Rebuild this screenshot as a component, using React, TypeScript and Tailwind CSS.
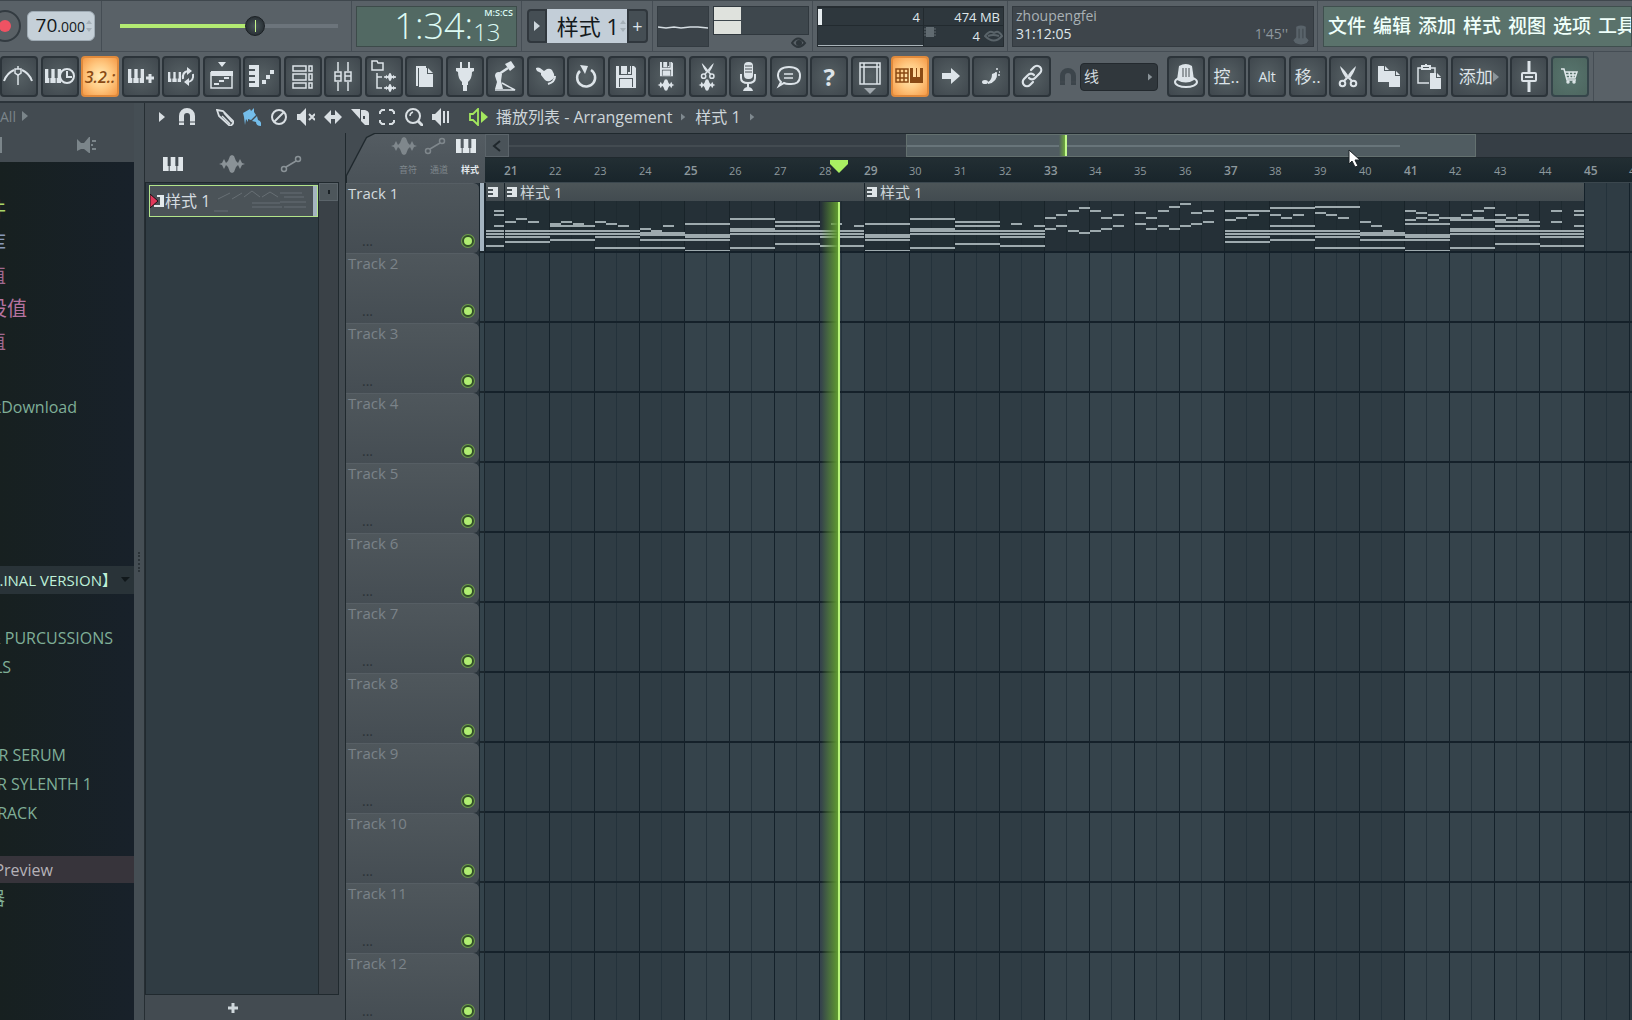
import * as React from 'react';
import { clsx } from 'clsx';

const SANS = "font-['Open_Sans','Noto_Sans_CJK_SC',sans-serif]";

/* ---------- shared glyphs ---------- */

function Glyph({
  w = 38,
  h = 41,
  className,
  children,
}: {
  w?: number;
  h?: number;
  className?: string;
  children: React.ReactNode;
}) {
  return (
    <svg
      width={w}
      height={h}
      viewBox={`0 0 ${w} ${h}`}
      fill="none"
      stroke="currentColor"
      strokeWidth="2"
      className={clsx('shrink-0', className)}
      aria-hidden="true"
    >
      {children}
    </svg>
  );
}

// Three piano keys, drawn in a w x h box at x, y.
function Keys({ x, y, w, h }: { x: number; y: number; w: number; h: number }) {
  const k = w / 3;
  return (
    <path
      stroke="none"
      fill="currentColor"
      fillRule="evenodd"
      d={`M${x} ${y}h${w}v${h}h${-w}z M${x + k - 2} ${y}h3v${h * 0.65}h-3z M${
        x + 2 * k - 1
      } ${y}h3v${h * 0.65}h-3z M${x + k - 1} ${y + h * 0.65}h1v${h * 0.35}h-1z M${
        x + 2 * k
      } ${y + h * 0.65}h1v${h * 0.35}h-1z`}
    />
  );
}

function Wave({ x, y, s = 1 }: { x: number; y: number; s?: number }) {
  return (
    <path
      transform={`translate(${x} ${y}) scale(${s})`}
      stroke="none"
      fill="currentColor"
      d="M-13 0l3-1 2-4 2 4 2-2 2-5 2-1 2 1 2 5 2 2 2-4 2 4 3 1-3 1-2 4-2-4-2 2-2 5-2 1-2-1-2-5-2-2-2 4-2-4z"
    />
  );
}

const FILL = { stroke: 'none', fill: 'currentColor' };

const Play = ({ className }: { className?: string }) => (
  <Glyph w={7} h={12} className={className}>
    <path {...FILL} d="M0 1l6 5-6 5z" />
  </Glyph>
);

const Magnet = ({ className }: { className?: string }) => (
  <Glyph w={18} h={20} className={className}>
    <path {...FILL} d="M1 18V9a8 8 0 0 1 16 0v9h-5V9a3 3 0 0 0-6 0v9z" />
    <path d="M1 15h5M12 15h5" stroke="#434b51" strokeWidth="1" />
  </Glyph>
);

const Automation = ({ className }: { className?: string }) => (
  <Glyph w={22} h={18} className={className}>
    <circle cx="4" cy="14" r="2.5" strokeWidth="1.5" />
    <circle cx="18" cy="4" r="2.5" strokeWidth="1.5" />
    <path d="M6 12l10-6" strokeWidth="1.5" />
  </Glyph>
);

const WaveIcon = ({ className }: { className?: string }) => (
  <Glyph w={26} h={18} className={className}>
    <Wave x={13} y={9} />
  </Glyph>
);

const PianoIcon = ({ className }: { className?: string }) => (
  <Glyph w={20} h={16} className={className}>
    <Keys x={0} y={1} w={20} h={14} />
  </Glyph>
);

const Scissors = ({ s = 1, x = 0, y = 0 }: { s?: number; x?: number; y?: number }) => (
  <g transform={`translate(${x} ${y}) scale(${s})`}>
    <path {...FILL} d="M1 0q4 3 10 12l-2 3Q2 6 1 0zM17 0q-4 3-10 12l2 3Q16 6 17 0z" />
    <circle cx="3.5" cy="17.5" r="2.8" />
    <circle cx="14.5" cy="17.5" r="2.8" />
    <path d="M5 15l5-5M13 15l-5-5" />
  </g>
);

const Floppy = ({ x, y, s }: { x: number; y: number; s: number }) => (
  <g transform={`translate(${x} ${y}) scale(${s})`} stroke="none">
    <path
      fill="currentColor"
      fillRule="evenodd"
      d="M0 0h3v9h13V0h2l2 2v20H0zM3 12h14v9H3z"
    />
    <path fill="currentColor" d="M4 13h12v8H4zM5 0h6v8H5zM14 0h1v8h-3V6h2z" />
  </g>
);

const Page = ({ x, y }: { x: number; y: number }) => (
  <g transform={`translate(${x} ${y})`} stroke="none" fill="currentColor">
    <path d="M0 0h6v5h5v11H0z" />
    <path d="M7 0l4 4H7z" />
  </g>
);

/* ---------- toolbar ---------- */

interface Tool {
  label: string;
  icon?: React.ReactNode;
  text?: string;
  on?: boolean;
}

const TOOLS: Tool[] = [
  {
    label: 'Metronome',
    icon: (
      <>
        <path d="M4 25Q7 17 14 14M22 14q7 3 10 11" />
        <path d="M18 18v11" strokeWidth="1.5" />
        <path d="M15 13h6v4l-3 2-3-2zM18 10v3" strokeWidth="1.5" />
      </>
    ),
  },
  {
    label: 'Wait for input',
    icon: (
      <>
        <Keys x={4} y={13} w={16} h={14} />
        <circle cx="26" cy="20" r="7" fill="#4a5357" />
        <path d="M26 15v6h5" />
      </>
    ),
  },
  { label: 'Countdown', text: '3.2.:', on: true },
  {
    label: 'Overdub',
    icon: (
      <>
        <Keys x={6} y={13} w={16} h={14} />
        <path d="M28 18v9M24 22h8" strokeWidth="3" />
      </>
    ),
  },
  {
    label: 'Loop recording',
    icon: (
      <>
        <Keys x={6} y={16} w={13} h={10} />
        <path d="M21 23q-1-7 5-8M31 18q1 7-5 8" />
        <path {...FILL} d="M25 11l5 4-5 4zM27 22v8l-5-4z" />
      </>
    ),
  },
  {
    label: 'Playlist',
    icon: (
      <>
        <path {...FILL} d="M15 6h8l-4 5zM8 15h22v5H8z" />
        <path d="M8 16v16h21V16" strokeWidth="1.5" />
        <path d="M11 28h5M16 25h5M21 22h5" />
      </>
    ),
  },
  {
    label: 'Piano roll',
    icon: (
      <>
        <path {...FILL} d="M6 9h10v22H6v-4h6v-2H6v-4h6v-2H6v-4h6v-2H6z" />
        <path d="M19 26h4M23 21h4M27 16h4" strokeWidth="4" />
      </>
    ),
  },
  {
    label: 'Channel rack',
    icon: (
      <g strokeWidth="1.5">
        <path d="M9 10h13v5H9zM9 18h13v6H9zM9 27h13v5H9z" />
        <path d="M25 10h3v5h-3zM25 18h3v6h-3zM25 27h3v5h-3z" />
      </g>
    ),
  },
  {
    label: 'Mixer',
    icon: (
      <g strokeWidth="1.5">
        <path d="M14 6v9M14 26v9M24 6v9M24 26v9" />
        <path d="M11 16h6v9h-6zM21 16h6v9h-6zM11 20h6M21 20h6" />
      </g>
    ),
  },
  {
    label: 'Browser',
    icon: (
      <g strokeWidth="1.5">
        <path d="M7 5h5l1 2h5v7H7zM12 17v15h5M12 21h5" />
        <Wave x={25} y={21} s={0.45} />
        <Wave x={25} y={32} s={0.45} />
        <path d="M19 21h12M19 32h12" />
      </g>
    ),
  },
  {
    label: 'Templates',
    icon: (
      <>
        <path {...FILL} d="M14 12h8v6h6v13H14zM23 12l5 5h-5z" />
        <path d="M12 30V11h9" />
      </>
    ),
  },
  {
    label: 'Plugins',
    icon: (
      <path
        {...FILL}
        d="M14 6h2v6h6V6h2v6h4v3l-2 1q0 7-4 10v3h-1v6h-4v-6h-1v-3q-4-3-4-10l-2-1v-3h4z"
      />
    ),
  },
  {
    label: 'Tempo tapper',
    icon: (
      <>
        <path {...FILL} d="M19 8l6-3 4 6-5 4z" />
        <path {...FILL} d="M9 20q0-4 4-4l3 2-1 7 2 8H9l2-7z" />
        <path d="M13 18l9-6" strokeWidth="2.5" />
        <path d="M9 34h20L16 27" strokeWidth="1.5" />
      </>
    ),
  },
  {
    label: 'Touch',
    icon: (
      <>
        <path
          {...FILL}
          d="M9 12q2-1 4 0l4 3 3-2q3-1 5 1l2 4q1 3-1 5l-3 2q-3 1-5-1l-4-5v-2l-4-2-1-2z"
        />
        <path d="M28 20q0 6-7 8" />
      </>
    ),
  },
  {
    label: 'Undo',
    icon: (
      <>
        <path d="M13 15a9 9 0 1 0 11-1" strokeWidth="2.5" />
        <path {...FILL} d="M13 9l8 1-3 8z" />
      </>
    ),
  },
  { label: 'Save', icon: <Floppy x={8} y={10} s={1} /> },
  {
    label: 'Render',
    icon: (
      <>
        <Floppy x={12} y={6} s={0.65} />
        <Wave x={18} y={29} s={0.65} />
      </>
    ),
  },
  {
    label: 'Edison',
    icon: (
      <>
        <Scissors x={12} y={7} s={0.75} />
        <Wave x={18} y={29} s={0.65} />
      </>
    ),
  },
  {
    label: 'Record audio',
    icon: (
      <>
        <rect {...FILL} x="15" y="6" width="9" height="17" rx="4" />
        <path d="M16 10h7M16 13h7M16 16h7" stroke="#4a5357" strokeWidth="1" />
        <path d="M12 18v4q0 5 7 5t7-5v-4M19 27v6" />
        <path {...FILL} d="M14 35q1-4 5-4t5 4z" />
      </>
    ),
  },
  {
    label: 'Comments',
    icon: (
      <>
        <path d="M11 26q-3-3-3-6 0-9 11-9t11 9-11 8q-3 0-5-1l-5 3z" />
        <path d="M14 18h9M14 22h9" strokeWidth="1.5" />
      </>
    ),
  },
  { label: 'Help', text: '?' },
  {
    label: 'View',
    icon: (
      <>
        <path d="M9 7h20v21H9zM9 11h20M13 7v21M26 7v21" strokeWidth="1.5" />
        <path {...FILL} d="M13 32h12l-6 6z" opacity=".6" />
      </>
    ),
  },
  {
    label: 'Typing keyboard',
    on: true,
    icon: (
      <>
        <path
          d="M5 13h12v13H5zM5 17h12M5 22h12M9 13v13M13 13v13"
          strokeWidth="1.5"
        />
        <path {...FILL} d="M19 12h3v9h3v-9h1v9h3v-9h3v15H19z" />
      </>
    ),
  },
  {
    label: 'Step edit',
    icon: <path {...FILL} d="M10 17h9v-5l9 8-9 8v-5h-9z" />,
  },
  {
    label: 'Glue',
    icon: (
      <>
        <ellipse {...FILL} cx="13" cy="26" rx="3" ry="2" />
        <path {...FILL} d="M16 26q4-2 4-8l5-2q1 10-9 12z" />
        <path d="M24 13h2M27 16h1M26 19h2M23 17h1" strokeWidth="1.5" />
      </>
    ),
  },
  {
    label: 'Link',
    icon: (
      <g strokeWidth="2.2" strokeLinecap="round">
        <path d="M16 22a4 4 0 0 0 6 0l5-5a4 4 0 0 0-6-6l-3 3" />
        <path d="M21 19a4 4 0 0 0-6 0l-4 4a4 4 0 0 0 6 6l3-3" />
      </g>
    ),
  },
];

const TOOLS_RIGHT: Tool[] = [
  {
    label: 'Hat',
    icon: (
      <>
        <ellipse cx="19" cy="26" rx="11" ry="5" />
        <path {...FILL} d="M12 10q7-4 13 0l2 14q-8 5-17 0z" />
        <path d="M16 12v9M19 12v9M22 12v9" stroke="#4a5357" strokeWidth="1" />
      </>
    ),
  },
  { label: 'Control', text: '控..' },
  { label: 'Alt', text: 'Alt' },
  { label: 'Shift', text: '移..' },
  { label: 'Cut', icon: <Scissors x={10} y={10} /> },
  {
    label: 'Copy',
    icon: (
      <>
        <Page x={8} y={10} />
        <Page x={19} y={15} />
      </>
    ),
  },
  {
    label: 'Paste',
    icon: (
      <>
        <path d="M19 27H8V12h4M20 12h5v5" strokeWidth="1.5" />
        <path d="M12 10h8v3h-8zM15 9h2" />
        <Page x={20} y={17} />
      </>
    ),
  },
  { label: 'Add', text: '添加' },
  {
    label: 'Fader',
    icon: (
      <>
        <path d="M19 5v11M19 26v10" strokeWidth="3" />
        <rect x="12" y="17" width="14" height="8" rx="1" />
        <path d="M15 21h8" />
      </>
    ),
  },
  {
    label: 'Shop',
    icon: (
      <g strokeWidth="1.5">
        <path d="M10 13h3l3 11h9M14 16h12l-2 6H15M18 16l1 6M22 16v6M14 19h11" />
        <circle cx="17" cy="26" r="1" />
        <circle cx="23" cy="26" r="1" />
      </g>
    ),
  },
];

function ToolButton({ tool }: { tool: Tool }) {
  const wide = tool.label === 'Add';
  return (
    <button
      type="button"
      aria-label={tool.label}
      aria-pressed={tool.on}
      className={clsx(
        'flex h-[41px] shrink-0 items-center justify-center overflow-hidden rounded-sm border-2',
        wide ? 'w-[57px]' : 'w-[38px]',
        tool.on
          ? 'border-[#e08a3c] bg-radial from-[#ffedb8] via-[#ffc880] to-[#f59a45] text-[#8a4a14]'
          : tool.label === 'Shop'
            ? 'border-[#35454a] bg-radial from-[#58756e] to-[#4d665f] text-[#dfe8ea]'
            : 'border-[#2c343a] bg-radial from-[#566064] to-[#3f474d] text-[#dde4e9]'
      )}
    >
      {tool.icon && <Glyph>{tool.icon}</Glyph>}
      {tool.text && (
        <span
          className={clsx(
            'whitespace-nowrap',
            SANS,
            tool.text === '?'
              ? 'text-2xl font-bold'
              : tool.text === 'Alt'
                ? 'text-[14px]'
                : tool.on
                  ? 'text-[16px] font-semibold italic'
                  : 'text-[17px]'
          )}
        >
          {tool.text}
        </span>
      )}
      {wide && <Play className="text-[#8b9499]" />}
    </button>
  );
}

/* ---------- transport bar ---------- */

const MENU = ['文件', '编辑', '添加', '样式', '视图', '选项', '工具'];

const Updown = () => (
  <Glyph w={8} h={16} className="text-[#a5b0b8]">
    <path {...FILL} d="M1 6l3-4 3 4zM1 10l3 4 3-4z" />
  </Glyph>
);

const sep = 'border-r border-[#454d54]';

function Transport() {
  return (
    <div
      className={clsx(
        'flex h-[51px] items-stretch border-b border-[#454d54]',
        SANS
      )}
    >
      <div className={clsx('flex w-[102px] shrink-0 items-center', sep)}>
        <button
          type="button"
          aria-label="Record"
          className="-ml-[11px] flex size-8 shrink-0 items-center justify-center rounded-full border-2 border-[#333b41] bg-[#596065]"
        >
          <span className="size-3 rounded-full bg-[#ef5263]" />
        </button>
        <div className="ml-[6px] flex h-[30px] w-[68px] items-center justify-end rounded-md border border-[#9fabb4] bg-[#c5d0d8] pr-px text-[#14191c]">
          <span className="flex items-baseline text-[19px] leading-7">
            70<span className="text-[14px]">.000</span>
          </span>
          <Updown />
        </div>
      </div>
      <div className={clsx('flex w-[250px] shrink-0 items-center pl-[18px]', sep)}>
        <div className="relative flex h-6 w-[218px] items-center">
          <div className="h-1 w-[130px] bg-[#b3ea72]" />
          <div className="h-1 flex-1 bg-[#6c747b]" />
          <input
            type="range"
            aria-label="Main pitch"
            defaultValue={62}
            className="absolute inset-0 opacity-0"
          />
          <div className="pointer-events-none absolute left-[125px] flex size-5 items-center justify-center rounded-full border border-[#1b2024] bg-radial from-[#4b565c] to-[#1e2428]">
            <div className="h-3 w-px bg-[#c5f58b]" />
          </div>
        </div>
      </div>
      <div className={clsx('flex w-[170px] shrink-0 items-center pl-1', sep)}>
        <div className="flex h-[41px] w-[161px] items-stretch justify-end border border-[#3d4b4a] bg-[#526963] pr-[3px] text-[#ddfaf4]">
          <span className="text-[36px] leading-[38px] font-light">1:34:</span>
          <div className="flex flex-col">
            <span className="pl-[11px] text-[9px] leading-[11px] font-semibold">
              M:S:CS
            </span>
            <span className="text-[24px] leading-[28px] font-light">13</span>
          </div>
        </div>
      </div>
      <div className={clsx('flex w-[131px] shrink-0 items-center pl-[5px]', sep)}>
        <button
          type="button"
          aria-label="Pattern menu"
          className="flex h-[34px] w-5 items-center justify-center rounded-l border-2 border-[#30373d] bg-[#454e54] text-[#cdd6dc]"
        >
          <Play />
        </button>
        <div className="flex h-[34px] w-[80px] items-center justify-end bg-[#c3ced8] text-[22px] leading-[34px] whitespace-nowrap text-[#14191c]">
          样式 1
          <Updown />
        </div>
        <button
          type="button"
          aria-label="Add pattern"
          className="h-[34px] w-[21px] rounded-r border-2 border-[#30373d] bg-[#454e54] text-[18px] leading-none text-[#dde4e9]"
        >
          +
        </button>
      </div>
      <div className={clsx('flex w-[160px] shrink-0 gap-1 pt-[5px] pl-1', sep)}>
        <div className="flex h-[41px] w-[52px] items-center border border-[#333b41] bg-[#3b4349]">
          <Glyph w={50} h={8} className="text-[#d5dde2]">
            <path d="M0 4l8 1 8-1 7 1 9-1h8l10 1" strokeWidth="1.5" />
          </Glyph>
        </div>
        <div className="flex flex-col items-end">
          <div className="flex h-[29px] w-[96px] border border-[#30383e] bg-[#3e474d]">
            <div className="flex w-[27px] flex-col gap-px">
              <div className="flex-1 bg-[#dfe2dd]" />
              <div className="flex-1 bg-[#dfe2dd]" />
            </div>
          </div>
          <Glyph w={16} h={12} className="mt-[2px] mr-[2px] text-[#2e363b]">
            <path d="M1 6q6-9 13 0-7 8-13 0z" />
            <circle {...FILL} cx="8" cy="6" r="3" />
          </Glyph>
        </div>
      </div>
      <div className={clsx('flex w-[195px] shrink-0 pt-[5px] pl-1', sep)}>
        <div className="flex h-[41px] w-[187px] border border-t-2 border-[#252c31] bg-[#2e373d] text-[13px] text-[#dfe6ea]">
          <div className="flex w-[106px] flex-col border-r border-[#222a2f]">
            <div className="flex h-[18px] items-center justify-between border-b border-[#222a2f] pr-[3px]">
              <span className="h-4 w-1 bg-[#e6ecef]" />
              <span className="leading-[18px]">4</span>
            </div>
            <div className="mt-auto h-px bg-[#aab4ba]" />
          </div>
          <div className="flex flex-1 flex-col">
            <div className="h-[18px] border-b border-[#222a2f] pr-[3px] text-right leading-[18px]">
              474 MB
            </div>
            <div className="flex items-center justify-end gap-1">
              <Glyph w={12} h={10} className="mr-auto mb-2 text-[#616b71]">
                <path {...FILL} d="M2 0h8v10H2z" />
                <path d="M0 2h12M0 5h12M0 8h12" strokeWidth="1" />
              </Glyph>
              <span className="leading-5">4</span>
              <Glyph w={19} h={12} className="text-[#5a646a]">
                <path d="M1 6q4-5 7-4l2 1 2-1q3-1 6 4-8 9-17 0zM4 6q5-2 11 0" />
              </Glyph>
            </div>
          </div>
        </div>
      </div>
      <div className={clsx('flex w-[310px] shrink-0 pt-[5px] pl-1', sep)}>
        <div className="flex h-[41px] w-[302px] items-end justify-between border border-[#333a40] bg-[#3e454b] px-[3px] text-[14px]">
          <div className="self-start leading-[18px]">
            <div className="text-[#a9b1b5]">zhoupengfei</div>
            <div className="text-[#dfe6ea]">31:12:05</div>
          </div>
          <div className="flex items-end gap-1 text-[#8f989e]">
            <span className="pb-1 leading-4">1'45''</span>
            <Glyph w={18} h={22} className="pb-px text-[#59636a]">
              <path {...FILL} d="M4 3q5-3 10 0v11l3 3-2 3q-6 3-12 0l-2-3 3-3z" />
              <path d="M7 5v10M11 5v10" stroke="#3e454b" strokeWidth="1" />
            </Glyph>
          </div>
        </div>
      </div>
      <nav className="mt-[5px] ml-[5px] flex h-[41px] min-w-0 flex-1 items-center gap-[7px] overflow-hidden border border-[#3f4f4e] bg-[#5a726b] pl-1 text-[19px] font-medium whitespace-nowrap text-[#effffa]">
        {MENU.map((m) => (
          <a key={m} href="#" className="shrink-0">
            {m}
          </a>
        ))}
      </nav>
    </div>
  );
}

function Toolbar() {
  return (
    <div className="flex h-[51px] items-center border-b-2 border-[#2c343a]">
      <div className="flex w-[1051px] shrink-0 justify-between">
        {TOOLS.map((t) => (
          <ToolButton key={t.label} tool={t} />
        ))}
      </div>
      <Magnet className="ml-2 text-[#3c454b]" />
      <select
        aria-label="Snap"
        className={clsx(
          'ml-[3px] h-7 w-[78px] shrink-0 appearance-none rounded-sm border border-[#23292e] bg-[#30373c] px-[3px] text-[15px] leading-none text-[#d2dade]',
          SANS
        )}
      >
        <option>线</option>
      </select>
      <Play className="-ml-[10px] w-[5px] text-[#8b9499]" />
      <div className="ml-[14px] flex h-full w-[427px] shrink-0 items-center justify-between border-r border-[#454d54] pr-1">
        {TOOLS_RIGHT.map((t) => (
          <ToolButton key={t.label} tool={t} />
        ))}
      </div>
    </div>
  );
}

/* ---------- browser ---------- */

// Labels are scrolled partly out of the panel, so each one is anchored by its right edge.
function BrowserRow({
  text,
  end,
  className,
}: {
  text: string;
  end: string;
  className?: string;
}) {
  return (
    <li className={clsx('flex items-center', className)}>
      <span className={clsx('flex justify-end whitespace-nowrap', end)}>{text}</span>
    </li>
  );
}

function Browser() {
  const folder = 'h-[29px] text-[#7fae97]';
  return (
    <aside
      className={clsx(
        'flex w-[134px] shrink-0 flex-col overflow-hidden bg-linear-to-r from-[#172020] to-[#18212a]',
        SANS
      )}
    >
      <div className="h-[59px] bg-[#434b51] text-[#7b858a]">
        <div className="flex h-[26px] items-center gap-[6px] text-[14px]">
          All
          <Play />
        </div>
        <div className="flex h-[32px] items-center">
          <div className="h-4 w-[2px] bg-[#7b858a]" />
          <Glyph w={20} h={18} className="ml-[75px]">
            <path {...FILL} d="M0 3l4 4h3l5-6h1v16h-1l-5-4H4l-4 2z" />
            <path d="M15 5h4M14 9h2M15 13h4" />
          </Glyph>
        </div>
      </div>
      <ul className="pt-[31px] text-[20px] leading-7">
        <BrowserRow text="件" end="w-[6px]" className="h-[33px] text-[#a8d568]" />
        <BrowserRow text="库" end="w-[6px]" className="h-[33px] text-[#8799b8]" />
        <BrowserRow text="值" end="w-[6px]" className="h-[33px] text-[#a0688f]" />
        <BrowserRow text="设值" end="w-[27px]" className="h-[33px] text-[#b573a0]" />
        <BrowserRow text="值" end="w-[6px]" className="h-[33px] text-[#a0688f]" />
      </ul>
      <ul className="mt-[32px] text-[16px] leading-6">
        <BrowserRow text="kDownload" end="w-[77px]" className="h-[33px] text-[#7fae97]" />
        <li className="mt-[143px] flex h-7 items-center justify-between bg-[#293338] pr-1 text-[#bff0d8]">
          <span className="flex w-[117px] justify-end text-[15px] whitespace-nowrap">
            ..INAL VERSION】
          </span>
          <Glyph w={9} h={6} className="text-[#11181b]">
            <path {...FILL} d="M0 0h9L4 5z" />
          </Glyph>
        </li>
        <BrowserRow text="& PURCUSSIONS" end="w-[113px]" className={`mt-[29px] ${folder}`} />
        <BrowserRow text="LS" end="w-[11px]" className={folder} />
        <BrowserRow text="R SERUM" end="w-[66px]" className={`mt-[59px] ${folder}`} />
        <BrowserRow text="R SYLENTH 1" end="w-[92px]" className={folder} />
        <BrowserRow text="RACK" end="w-[37px]" className={folder} />
        <BrowserRow
          text="Preview"
          end="w-[53px]"
          className="mt-[29px] h-[27px] bg-[#37343b] text-[#b5b2b8]"
        />
        <BrowserRow text="器" end="w-[5px]" className={`text-[18px] ${folder}`} />
      </ul>
    </aside>
  );
}

/* ---------- playlist ---------- */

const BAR = 45;

// Notes per bar: [first quarter, length in quarters, y].
type Note = [number, number, number];
const full = (...ys: number[]): Note[] => ys.map((y) => [0, 4, y]);
// One note per quarter, null leaves a rest.
const run = (...ys: (number | null)[]): Note[] =>
  ys.flatMap((y, i) => (y === null ? [] : [[i, 1, y] as Note]));

const A = full(36, 46, 48, 51, 65);
const B = full(39, 43, 48, 51, 61);
const C = [...full(48, 51, 54, 63), ...run(null, 41, null, 43)];
const D = full(41, 52, 54, 57, 68);

// Only the last beats of this clip are in view.
const INTRO: Note[][] = [
  [
    [0, 2, 48],
    [0, 2, 51],
    [0, 2, 54],
    [0, 2, 63],
    [0.7, 1, 28],
    [0.7, 1, 32],
    [0.7, 1, 43],
  ],
];

const FIRST: Note[][] = [
  [...run(39, 36, 39), ...full(48, 51, 54, 59)],
  [...run(41, 39, 41), ...full(43, 48, 51, 57)],
  [...run(39, 41, 43), ...full(48, 51, 54, 65)],
  [...run(46, 48, 43), ...full(50, 52, 57, 65)],
  D,
  A,
  B,
  C,
];

const SECOND: Note[][] = [
  D,
  A,
  B,
  C,
  [...run(35, 32, 28, 25), ...run(46, 43, 48, 50)],
  [...run(28, 35, 32), ...run(48, 46, 43)],
  [...run(30, 35, 28, 24), ...run(41, 46, 43, 46)],
  [...run(21, 30, 28), ...run(43, 41, 39)],
  [...run(37, 35, 32), ...full(28, 48, 51, 54, 59)],
  [...run(32, 35, 32), ...full(25, 43, 48, 51, 57)],
  [...run(30, 32, 35), ...full(24, 48, 51, 54, 65)],
  [...run(39, 43, 48), ...full(50, 52, 57, 65)],
  [...run(28, 30, 32, 35), ...run(37, 35, 37), ...full(41, 52, 54, 57, 68)],
  [...run(35, 32, 28, 25), ...run(null, null, 35), ...full(37, 46, 48, 51, 65)],
  [...run(32, 35, 32), ...run(37, null, 37), ...full(39, 43, 48, 51, 61)],
  [
    ...run(null, 28, null, 28),
    ...run(null, 39, null, 32),
    ...run(null, null, null, 43),
    ...full(48, 51, 54, 63),
  ],
];

function Notes({ bars, top }: { bars: Note[][]; top: number }) {
  return (
    <svg
      width={bars.length * BAR}
      height={70 - top}
      className="block text-[#9eaaae]"
      fill="currentColor"
      aria-hidden="true"
    >
      {bars.flatMap((notes, b) =>
        notes.map(([q, len, y], i) => (
          <rect
            key={`${b}-${i}`}
            x={Math.round(b * BAR + (q * BAR) / 4)}
            y={y - top - 1}
            width={Math.round((len * BAR) / 4)}
            height={2}
          />
        ))
      )}
    </svg>
  );
}

const ClipMark = () => (
  <Glyph w={12} h={12} className="text-[#dfe5e8]">
    <path {...FILL} d="M1 1h10v10H1V9h5V7H1V5h5V3H1z" />
  </Glyph>
);

function Clip({
  label,
  bars,
  className,
}: {
  label?: string;
  bars: Note[][];
  className: string;
}) {
  return (
    <div
      className={clsx(
        'h-[69px] shrink-0 overflow-hidden border-l border-[#18232a] bg-[#1b252a]/60',
        className
      )}
    >
      <div
        className={clsx(
          'flex h-[18px] items-center gap-[2px] bg-linear-to-b from-[#4c5558] to-[#424b50] pl-px text-[15px] leading-[18px] whitespace-nowrap text-[#ccd4d8]',
          SANS
        )}
      >
        <ClipMark />
        {label}
      </div>
      <Notes bars={bars} top={18} />
    </div>
  );
}

const TRACKS = Array.from({ length: 12 }, (_, i) => `Track ${i + 1}`);
const RULER = Array.from({ length: 26 }, (_, i) => 21 + i);

function TrackHeader({ name, active }: { name: string; active: boolean }) {
  return (
    <div
      className={clsx(
        'flex h-[70px] w-[133px] shrink-0 flex-col justify-between rounded-r-md border-t border-[#565e64] bg-linear-to-b from-[#4f575c] to-[#454d53] pl-[2px]',
        SANS
      )}
    >
      <span
        className={clsx(
          'text-[15px] leading-[18px]',
          active ? 'text-[#d3dade]' : 'text-[#7b8389]'
        )}
      >
        {name}
      </span>
      <div className="flex items-center justify-between pr-[5px] pb-[6px] pl-[14px]">
        <span className="text-[14px] leading-3 text-[#2b3237]">...</span>
        <button
          type="button"
          aria-label={`Mute ${name}`}
          className="size-3 rounded-full border-2 border-[#33502a] bg-[#b0ee72] ring-1 ring-[#6d9c4a]"
        />
      </div>
    </div>
  );
}

function Tracks() {
  return (
    <div className="relative min-h-0 flex-1 overflow-hidden">
      {TRACKS.map((name, i) => (
        <div key={name} className="flex h-[70px] bg-[#2a343b]">
          <TrackHeader name={name} active={i === 0} />
          <div
            className={clsx(
              'w-[6px] shrink-0 border-x border-b-2 border-[#1b262d]',
              i === 0 ? 'bg-[#a4b4c0]' : 'bg-[#34434b]'
            )}
          />
          <div className="flex min-w-0 flex-1 overflow-hidden border-b-2 border-[#15212a] bg-[repeating-linear-gradient(90deg,#14212a_0_1px,transparent_1px_22px,#24323b_22px_23px,transparent_23px_45px),repeating-linear-gradient(90deg,#2f3c44_0_180px,#35434b_180px_360px)] bg-[position:19px_0]">
            {i === 0 && (
              <>
                <Clip bars={INTRO} className="w-[19px]" />
                <Clip label="样式 1" bars={FIRST} className="w-[360px]" />
                <Clip label="样式 1" bars={SECOND} className="w-[720px]" />
              </>
            )}
          </div>
        </div>
      ))}
      {/* Playhead */}
      <div className="absolute top-[19px] bottom-0 left-[475px] w-[19px] border-r-2 border-[#b9f57c] bg-linear-to-r from-[#5f9a30]/0 via-[#5f9a30]/50 to-[#5f9a30]" />
    </div>
  );
}

function Overview() {
  return (
    <div className="flex h-[25px] border-y border-[#20292e] bg-[#363e45]">
      <button
        type="button"
        aria-label="Scroll left"
        className="flex w-6 shrink-0 items-center justify-center border border-[#5b646a] bg-[#4a5359] text-[#1f272c]"
      >
        <Glyph w={10} h={14}>
          <path d="M8 2L2 7l6 5" />
        </Glyph>
      </button>
      <div className="flex min-w-0 flex-1 items-center">
        <div className="h-[2px] w-[397px] bg-[#434b51]" />
        <div className="flex h-full w-[570px] items-center border border-[#63706f] bg-[#505c61]">
          <div className="h-[2px] w-[152px] bg-[#68757a]" />
          <div className="h-full w-2 border-r-2 border-[#c2f98c] bg-linear-to-r from-[#6da83c]/0 to-[#6da83c]" />
          <div className="h-[2px] w-[333px] bg-[#68757a]" />
        </div>
      </div>
    </div>
  );
}

function Ruler() {
  return (
    <div
      className={clsx(
        'relative flex h-[25px] items-center overflow-hidden border-b border-[#3b474e] bg-linear-to-b from-[#222e33] to-[#19252b] pl-[19px] text-[#8d989d]',
        SANS
      )}
    >
      {RULER.map((n) => (
        <span
          key={n}
          className={clsx(
            'w-[45px] shrink-0 pt-[2px] leading-4',
            n % 4 === 1 ? 'text-[12px] font-semibold' : 'text-[11px]'
          )}
        >
          {n}
        </span>
      ))}
      <Glyph w={19} h={14} className="absolute top-[2px] left-[345px] text-[#a9ef62]">
        <path {...FILL} d="M0 0h18v4L9 13 0 4z" />
      </Glyph>
    </div>
  );
}

function FilterTabs() {
  const tabs = [
    { label: '音符', icon: <WaveIcon />, on: false },
    { label: '通道', icon: <Automation />, on: false },
    { label: '样式', icon: <PianoIcon />, on: true },
  ];
  return (
    <div className="h-[50px] w-[139px] shrink-0 bg-[#1f282d] pt-px pl-px [clip-path:polygon(0_100%,0_42px,20px_4px,28px_0,100%_0,100%_100%)]">
      <div className="flex h-full items-stretch justify-end gap-[3px] bg-linear-to-b from-[#545c62] to-[#4a5258] pr-[5px] [clip-path:polygon(0_100%,0_42px,20px_4px,28px_0,100%_0,100%_100%)]">
        {tabs.map((t) => (
          <button
            key={t.label}
            type="button"
            className={clsx(
              'flex w-[28px] flex-col items-center text-[9px] leading-3',
              SANS,
              t.on ? 'font-bold text-[#e2e8ec]' : 'text-[#7f878c]'
            )}
          >
            <span className="flex h-6 items-center">{t.icon}</span>
            <span className="mt-[6px] ml-2 whitespace-nowrap">{t.label}</span>
          </button>
        ))}
      </div>
    </div>
  );
}

function Picker() {
  return (
    <section className="flex w-[194px] shrink-0 flex-col">
      <div className="flex h-[49px] items-center pt-3 pl-[18px] text-[#8a9297]">
        <button type="button" aria-label="Patterns" className="text-[#dfe5e9]">
          <PianoIcon />
        </button>
        <button type="button" aria-label="Audio clips" className="ml-[36px]">
          <WaveIcon />
        </button>
        <button type="button" aria-label="Automation clips" className="ml-[35px]">
          <Automation />
        </button>
      </div>
      <div className="flex min-h-0 flex-1 border border-[#20292e]">
        <div className="min-w-0 flex-1 bg-[#303c43] pt-[2px] pl-[3px]">
          <div
            className={clsx(
              'flex h-[32px] w-[169px] items-center border border-[#b3e58a] bg-[#4b5358] text-[16px] text-[#d5dce0]',
              SANS
            )}
          >
            <Glyph w={14} h={18}>
              <path {...FILL} d="M7 3h7v12H4v-2h6V5H7z" fill="#e3e9ec" />
              <path d="M0 2l8 7-8 7z" fill="#e0395b" stroke="#1c1216" strokeWidth="1" />
            </Glyph>
            <span className="ml-px whitespace-nowrap">样式 1</span>
            <Glyph w={94} h={28} className="ml-1 text-[#676f74]">
              <path
                d="M4 12l12-6M18 12l10-6M30 10l8-6 8 6M48 10l8-5 8 5M38 16h28M38 20h30M66 6h22M70 10h20M66 15h26M70 20h22M0 24h14"
                strokeWidth="1"
              />
            </Glyph>
            <div className="ml-auto h-full w-1 shrink-0 bg-[#a4b4c0]" />
          </div>
        </div>
        <div className="w-5 border-l border-[#20292e] bg-[#3a4147]">
          <div className="flex h-[18px] items-center justify-center border border-[#5b646a] bg-[#4d565b]">
            <span className="h-1 w-[2px] bg-[#1a2125]" />
          </div>
        </div>
      </div>
      <button
        type="button"
        aria-label="Add"
        className="flex h-[25px] items-center pl-[82px] text-[#cfd7db]"
      >
        <Glyph w={12} h={12}>
          <path d="M6 1v10M1 6h10" strokeWidth="3" />
        </Glyph>
      </button>
    </section>
  );
}

const EDIT_TOOLS: Tool[] = [
  {
    label: 'Draw',
    icon: (
      <g strokeWidth="1.8">
        <path d="M1 2l6 1 10 10q1 3-3 5L3 8z" />
        <path d="M6 8l8 8M8 5l8 9" strokeWidth="1.5" />
      </g>
    ),
  },
  {
    label: 'Paint',
    on: true,
    icon: (
      <>
        <path {...FILL} d="M0 5l7-4 1 2 3-3v4l2 3-5 5-3-1v3l-2-3-1 6-1-8z" />
        <path {...FILL} d="M9 13l5-5 1 4q4 1 3 6-5 0-5-4z" />
      </>
    ),
  },
  {
    label: 'Delete',
    icon: (
      <>
        <circle cx="9" cy="9" r="7" />
        <path d="M4 14L14 4" />
      </>
    ),
  },
  {
    label: 'Mute',
    icon: (
      <>
        <path {...FILL} d="M0 6h3l6-6v18l-6-6H0z" />
        <path d="M12 6l6 6M18 6l-6 6" />
      </>
    ),
  },
  {
    label: 'Slip',
    icon: <path {...FILL} d="M0 9l7-7v5h4V2l7 7-7 7v-5H7v5z" />,
  },
  {
    label: 'Slice',
    icon: (
      <path
        {...FILL}
        fillRule="evenodd"
        d="M0 1h9v10zM10 2h4q4 1 4 4v11h-4l-4-4zM12 8v3h2V8z"
      />
    ),
  },
  {
    label: 'Select',
    icon: (
      <path d="M2 6V4l2-2h3M11 2h3l2 2v2M16 12v2l-2 2h-3M7 16H4l-2-2v-2" />
    ),
  },
  {
    label: 'Zoom',
    icon: (
      <>
        <circle cx="8" cy="8" r="7" />
        <path d="M5 8q0-3 3-4" strokeWidth="1.5" />
        <path d="M13 13l5 5" strokeWidth="3" />
      </>
    ),
  },
  {
    label: 'Playback',
    icon: (
      <>
        <path {...FILL} d="M0 6h3l6-6v18l-6-6H0z" />
        <path d="M12 3v12M16 3v12" />
      </>
    ),
  },
];

function PlaylistBar() {
  return (
    <div className="flex h-[30px] shrink-0 items-center pb-[2px] pl-[14px] text-[#d9dfe3]">
      <Play />
      <button type="button" aria-label="Snap to grid" className="ml-[12px]">
        <Magnet />
      </button>
      <div className="ml-[15px] flex">
        {EDIT_TOOLS.map((t) => (
          <button
            key={t.label}
            type="button"
            aria-label={t.label}
            className={clsx('flex w-[27px] justify-center', t.on && 'text-[#74bdea]')}
          >
            <Glyph w={18} h={18}>
              {t.icon}
            </Glyph>
          </button>
        ))}
      </div>
      <Glyph w={20} h={18} className="ml-[15px] text-[#a4e85e]">
        <path d="M1 6h3l5-5v16l-5-5H1z" strokeWidth="1.8" />
        <path {...FILL} d="M12 3l7 6-7 6z" />
      </Glyph>
      <div
        className={clsx(
          'ml-[7px] flex items-center gap-[9px] text-[16px] whitespace-nowrap text-[#cdd5d9]',
          SANS
        )}
      >
        播放列表 - Arrangement
        <Play className="w-[5px] text-[#7f898f]" />
        样式 1
        <Play className="w-[5px] text-[#7f898f]" />
      </div>
    </div>
  );
}

export default function App() {
  return (
    <div className="relative flex h-screen flex-col overflow-hidden bg-[#434b51]">
      <header className="shrink-0 border-t border-[#3f474d] bg-[#596167]">
        <Transport />
        <Toolbar />
      </header>
      <main className="flex min-h-0 flex-1">
        <Browser />
        <div className="flex w-[11px] shrink-0 items-center justify-center border-r border-[#262e33] bg-[#454e54]">
          <div className="h-5 border-l-2 border-dotted border-[#2b3338]" />
        </div>
        <div className="flex min-w-0 flex-1 flex-col">
          <PlaylistBar />
          <div className="flex min-h-0 flex-1">
            <Picker />
            <div className="w-[6px] shrink-0" />
            <section className="flex min-w-0 flex-1 flex-col border-l border-[#20292e]">
              <div className="flex">
                <FilterTabs />
                <div className="min-w-0 flex-1">
                  <Overview />
                  <Ruler />
                </div>
              </div>
              <Tracks />
            </section>
          </div>
        </div>
      </main>
      {/* Mouse pointer */}
      <svg
        className="pointer-events-none absolute top-[149px] left-[1348px]"
        width="13"
        height="19"
        viewBox="0 0 13 19"
        aria-hidden="true"
      >
        <path
          d="M1 1v14l3-3 3 6 3-1-3-6h5z"
          fill="#fff"
          stroke="#1b2226"
          strokeWidth="1"
        />
      </svg>
    </div>
  );
}
